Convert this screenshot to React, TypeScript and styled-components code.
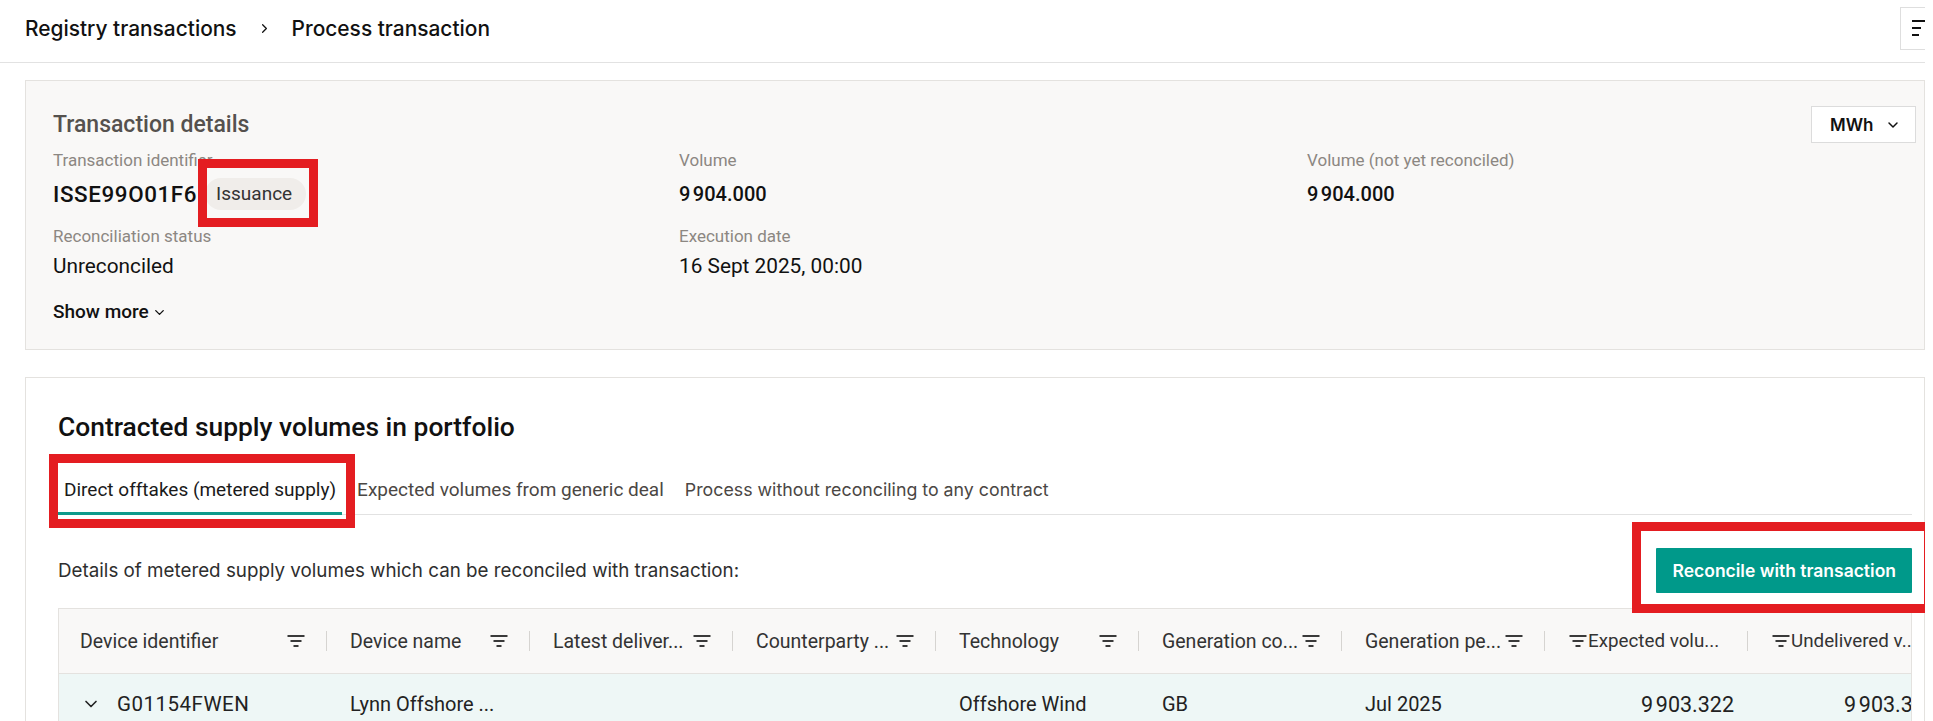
import React from "react";
import styled, { createGlobalStyle } from "styled-components";
import { ChevronDown, ChevronRight } from "lucide-react";

const GlobalStyle = createGlobalStyle`
  body {
    margin: 0;
    background: #ffffff;
    font-family: Roboto, "Liberation Sans", sans-serif;
    color: #1a1a1a;
  }
  * { box-sizing: border-box; }
`;

const Page = styled.div`
  position: relative;
  width: 1925px;
  min-height: 721px;
  overflow: hidden;
`;

/* ~~~ top bar ~~~ */
const TopBar = styled.header`
  height: 63px;
  border-bottom: 1px solid #e2e2e2;
  display: flex;
  align-items: center;
  justify-content: space-between;
  padding-left: 25px;
  overflow: hidden;
`;

const Crumbs = styled.nav`
  display: flex;
  align-items: center;
  gap: 20px;
  margin-bottom: 5px;
  font-family: Inter, "Noto Sans", sans-serif;
  font-size: 20.9px;
  font-weight: 500;
  color: #111;
`;

const MenuButton = styled.button`
  width: 38px;
  height: 43px;
  margin-right: -13px;
  margin-bottom: 6px;
  background: #fff;
  border: 1px solid #dedede;
  padding: 0 0 0 11px;
  display: flex;
  flex-direction: column;
  justify-content: center;
  gap: 5px;
`;

const MenuLine = styled.span<{ $w: number }>`
  display: block;
  height: 2px;
  width: ${(p) => p.$w}px;
  background: #111;
`;

/* ~~~ main ~~~ */
const Main = styled.main`
  padding: 17px 0 0 25px;
`;

const DetailsCard = styled.section`
  background: #f9f8f7;
  border: 1px solid #e4e2df;
  padding: 25px 8px 25px 27px;
`;

const CardHead = styled.div`
  display: flex;
  align-items: center;
  justify-content: space-between;
`;

const DetailsTitle = styled.h2`
  margin: 0;
  font-size: 23px;
  line-height: 28px;
  font-weight: 500;
  color: #55514e;
`;

const UnitSelect = styled.button`
  width: 105px;
  height: 37px;
  background: #fff;
  border: 1px solid #dcdcdc;
  display: flex;
  align-items: center;
  gap: 12px;
  padding: 0 0 0 18px;
  font-family: Inter, "Noto Sans", sans-serif;
  font-size: 17px;
  font-weight: 600;
  color: #111;
`;

const FieldGrid = styled.div`
  display: grid;
  grid-template-columns: 626px 628px 1fr;
  align-items: center;
  margin-top: 7px;
`;

const Label = styled.div<{ $gap?: number }>`
  font-size: 17px;
  line-height: 20px;
  color: #8c8782;
  margin-top: ${(p) => p.$gap ?? 0}px;
  margin-bottom: 8px;
`;

const Value = styled.div<{ $bold?: boolean; $num?: boolean }>`
  display: flex;
  align-items: center;
  min-height: 24px;
  font-size: ${(p) => (p.$num ? 20 : 20.8)}px;
  line-height: 24px;
  font-weight: ${(p) => (p.$bold ? 500 : 400)};
  letter-spacing: ${(p) => (p.$num ? "0.6px" : "0")};
  color: #111;
`;

const Ident = styled.span`
  font-size: 22.4px;
  letter-spacing: 0.6px;
`;

const Badge = styled.span`
  display: inline-flex;
  align-items: center;
  height: 32px;
  margin-left: 8px;
  padding: 0 14px 0 11px;
  border-radius: 16px;
  background: #f0edea;
  font-size: 19px;
  font-weight: 400;
  letter-spacing: 0;
  color: #333;
`;

const ShowMore = styled.button`
  margin-top: 22px;
  display: flex;
  align-items: center;
  gap: 3px;
  padding: 0;
  border: 0;
  background: none;
  font-family: Roboto, "Liberation Sans", sans-serif;
  font-size: 19px;
  line-height: 24px;
  font-weight: 500;
  color: #111;
`;

/* ~~~ supply card ~~~ */
const SupplyCard = styled.section`
  margin-top: 27px;
  background: #fff;
  border: 1px solid #e4e2df;
  border-bottom: 0;
  padding: 33px 12px 0 32px;
`;

const SupplyTitle = styled.h2`
  margin: 0 0 23px;
  font-size: 26.4px;
  line-height: 32px;
  font-weight: 500;
  color: #111;
`;

const TabList = styled.div`
  display: flex;
  gap: 9px;
  border-bottom: 1px solid #e2e2e2;
`;

const Tab = styled.button<{ $active?: boolean; $alt?: boolean }>`
  background: none;
  border: 0;
  border-bottom: 3px solid ${(p) => (p.$active ? "#0e9a8b" : "transparent")};
  margin-bottom: -1px;
  padding: 13px 6px 11px;
  font-family: ${(p) => (p.$alt ? 'Inter, "Noto Sans", sans-serif' : 'Roboto, "Liberation Sans", sans-serif')};
  font-size: ${(p) => (p.$alt ? 17.8 : 19)}px;
  line-height: 22px;
  color: ${(p) => (p.$active ? "#1a1a1a" : "#4b4744")};
  white-space: nowrap;
`;

const ActionRow = styled.div`
  margin-top: 33px;
  display: flex;
  align-items: center;
  justify-content: space-between;
`;

const Hint = styled.p`
  margin: 0;
  font-family: Inter, "Noto Sans", sans-serif;
  font-size: 18.8px;
  color: #2e2e2e;
`;

const PrimaryButton = styled.button`
  height: 45px;
  padding: 0 16px;
  border: 0;
  border-radius: 1px;
  background: #00998a;
  color: #fff;
  font-family: Inter, "Noto Sans", sans-serif;
  font-size: 17.5px;
  font-weight: 600;
`;

/* ~~~ table ~~~ */
const TableWrap = styled.div`
  margin-top: 15px;
  border: 1px solid #e4e2df;
  border-bottom: 0;
  overflow: hidden;
`;

const Row = styled.div<{ $head?: boolean }>`
  display: grid;
  grid-template-columns: 268px repeat(8, 203px);
  height: ${(p) => (p.$head ? 65 : 60)}px;
  background: ${(p) => (p.$head ? "#f9f8f7" : "#eef7f6")};
  border-bottom: ${(p) => (p.$head ? "1px solid #e4e2df" : "0")};
`;

const HeadCell = styled.div<{ $first?: boolean; $num?: boolean }>`
  display: flex;
  align-items: center;
  min-width: 0;
  padding-left: ${(p) => (p.$first ? 21 : p.$num ? 24 : 23)}px;
  font-size: 19.5px;
  color: #333;
  white-space: nowrap;
`;

const HeadText = styled.span<{ $num?: boolean }>`
  flex: 1;
  min-width: 0;
  overflow: hidden;
  margin-left: ${(p) => (p.$num ? 1 : 0)}px;
  margin-right: ${(p) => (p.$num ? 8 : 0)}px;
  font-size: ${(p) => (p.$num ? 18.8 : 19.5)}px;
`;

const FilterGap = styled.span`
  width: 21px;
  flex: none;
`;

const Divider = styled.span`
  width: 1px;
  height: 20px;
  flex: none;
  background: #d6d4d1;
`;

const Cell = styled.div<{ $first?: boolean; $num?: boolean }>`
  display: flex;
  align-items: center;
  justify-content: ${(p) => (p.$num ? "flex-end" : "flex-start")};
  gap: 16px;
  padding: 0 ${(p) => (p.$num ? 14 : 0)}px 0 ${(p) => (p.$first ? 22 : 23)}px;
  font-size: ${(p) => (p.$num ? 21.5 : 20)}px;
  letter-spacing: ${(p) => (p.$num ? "1.9px" : "0")};
  color: #222;
  white-space: nowrap;
`;

const DeviceId = styled.span`
  font-size: 20.5px;
  letter-spacing: 0.5px;
`;

/* ~~~ annotation marks ~~~ */
const Mark = styled.div<{ $x: number; $y: number; $w: number; $h: number }>`
  position: absolute;
  left: ${(p) => p.$x}px;
  top: ${(p) => p.$y}px;
  width: ${(p) => p.$w}px;
  height: ${(p) => p.$h}px;
  border: 9px solid #e41d21;
  pointer-events: none;
`;

function FilterIcon() {
  return (
    <svg width="18" height="13" viewBox="0 0 18 13" style={{ flex: "none" }}>
      <rect x="0.5" y="0" width="17" height="2" fill="#3a3a3a" />
      <rect x="3.5" y="5" width="11" height="2" fill="#3a3a3a" />
      <rect x="6.5" y="10" width="5" height="2" fill="#3a3a3a" />
    </svg>
  );
}

const columns = [
  { label: "Device identifier" },
  { label: "Device name" },
  { label: "Latest deliver..." },
  { label: "Counterparty ..." },
  { label: "Technology" },
  { label: "Generation co..." },
  { label: "Generation pe..." },
  { label: "Expected volu...", num: true },
  { label: "Undelivered v...", num: true },
];

export default function App() {
  return (
    <>
      <GlobalStyle />
      <Page>
        <TopBar>
          <Crumbs>
            <span>Registry transactions</span>
            <ChevronRight size={15} strokeWidth={2} />
            <span>Process transaction</span>
          </Crumbs>
          <MenuButton aria-label="Menu">
            <MenuLine $w={13} />
            <MenuLine $w={9} />
            <MenuLine $w={7} />
          </MenuButton>
        </TopBar>

        <Main>
          <DetailsCard>
            <CardHead>
              <DetailsTitle>Transaction details</DetailsTitle>
              <UnitSelect>
                MWh
                <ChevronDown size={16} strokeWidth={2.2} />
              </UnitSelect>
            </CardHead>
            <FieldGrid>
              <Label>Transaction identifier</Label>
              <Label>Volume</Label>
              <Label>Volume (not yet reconciled)</Label>
              <Value $bold>
                <Ident>ISSE99O01F6</Ident>
                <Badge>Issuance</Badge>
              </Value>
              <Value $bold $num>9&#8239;904.000</Value>
              <Value $bold $num>9&#8239;904.000</Value>
              <Label $gap={16}>Reconciliation status</Label>
              <Label $gap={16}>Execution date</Label>
              <span />
              <Value>Unreconciled</Value>
              <Value>16 Sept 2025, 00:00</Value>
              <span />
            </FieldGrid>
            <ShowMore>
              Show more
              <ChevronDown size={15} strokeWidth={2.2} />
            </ShowMore>
          </DetailsCard>

          <SupplyCard>
            <SupplyTitle>Contracted supply volumes in portfolio</SupplyTitle>
            <TabList>
              <Tab $active>Direct offtakes (metered supply)</Tab>
              <Tab>Expected volumes from generic deal</Tab>
              <Tab $alt>Process without reconciling to any contract</Tab>
            </TabList>
            <ActionRow>
              <Hint>Details of metered supply volumes which can be reconciled with transaction:</Hint>
              <PrimaryButton>Reconcile with transaction</PrimaryButton>
            </ActionRow>

            <TableWrap>
              <Row $head>
                {columns.map((c, i) =>
                  c.num ? (
                    <HeadCell key={c.label} $num>
                      <FilterIcon />
                      <HeadText $num>{c.label}</HeadText>
                      <Divider />
                    </HeadCell>
                  ) : (
                    <HeadCell key={c.label} $first={i === 0}>
                      <HeadText>{c.label}</HeadText>
                      <FilterIcon />
                      <FilterGap />
                      <Divider />
                    </HeadCell>
                  )
                )}
              </Row>
              <Row>
                <Cell $first>
                  <ChevronDown size={20} strokeWidth={2} />
                  <DeviceId>G01154FWEN</DeviceId>
                </Cell>
                <Cell>Lynn Offshore ...</Cell>
                <Cell />
                <Cell />
                <Cell>Offshore Wind</Cell>
                <Cell>GB</Cell>
                <Cell>Jul 2025</Cell>
                <Cell $num>9&#8239;903.322</Cell>
                <Cell $num>9&#8239;903.322</Cell>
              </Row>
            </TableWrap>
          </SupplyCard>
        </Main>

        <Mark $x={198} $y={159} $w={120} $h={68} />
        <Mark $x={49} $y={454} $w={306} $h={74} />
        <Mark $x={1632} $y={522} $w={301} $h={91} />
      </Page>
    </>
  );
}
